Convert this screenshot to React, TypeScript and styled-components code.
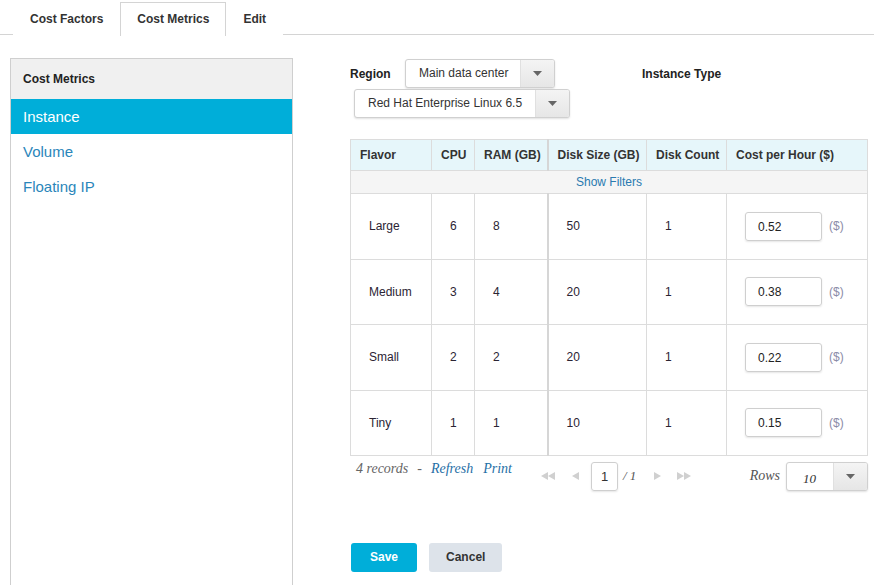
import React from "react";
import styled, { createGlobalStyle } from "styled-components";

const Global = createGlobalStyle`
  html, body { margin: 0; padding: 0; background: #fff; }
  body { font-family: "Liberation Sans", Arial, sans-serif; font-size: 12px; color: #333; }
  * { box-sizing: border-box; }
`;

const Page = styled.div`
  width: 874px;
  height: 585px;
  overflow: hidden;
`;

const TabBar = styled.div`
  display: flex;
  padding: 2px 0 0 13px;
  border-bottom: 1px solid #d4d4d4;
  height: 35px;
`;

const Tab = styled.div<{ $active?: boolean }>`
  padding: 0 16px;
  line-height: 32px;
  font-weight: bold;
  font-size: 12px;
  color: #333;
  border: 1px solid ${(p) => (p.$active ? "#d4d4d4" : "transparent")};
  border-bottom: none;
  background: #fff;
  height: ${(p) => (p.$active ? 34 : 33)}px;
`;

const Main = styled.div`
  display: flex;
  padding: 23px 0 0 10px;
`;

const Sidebar = styled.div`
  width: 283px;
  min-height: 560px;
  border: 1px solid #cfcfcf;
  flex-shrink: 0;
`;

const SideHeader = styled.div`
  height: 40px;
  background: #f0f0f0;
  font-weight: bold;
  font-size: 12px;
  color: #222;
  padding-left: 12px;
  line-height: 40px;
`;

const SideItem = styled.div<{ $active?: boolean }>`
  height: 35px;
  line-height: 35px;
  padding-left: 12px;
  font-size: 15px;
  color: ${(p) => (p.$active ? "#fff" : "#2a86ba")};
  background: ${(p) => (p.$active ? "#00aed9" : "transparent")};
`;

const Content = styled.div`
  margin-left: 57px;
  width: 518px;
  padding-top: 1px;
  display: flex;
  flex-direction: column;
`;

const FilterRow = styled.div<{ $indent?: number; $mt?: number }>`
  display: flex;
  align-items: center;
  padding-left: ${(p) => p.$indent ?? 0}px;
  margin-top: ${(p) => p.$mt ?? 0}px;
`;

const Label = styled.div<{ $w?: number; $ml?: number }>`
  font-weight: bold;
  font-size: 12px;
  color: #222;
  width: ${(p) => (p.$w ? p.$w + "px" : "auto")};
  margin-left: ${(p) => p.$ml ?? 0}px;
`;

const Select = styled.div<{ $w: number }>`
  display: flex;
  width: ${(p) => p.$w}px;
  height: 29px;
  border: 1px solid #d0d0d0;
  border-radius: 3px;
  box-shadow: 0 1px 2px rgba(0, 0, 0, 0.12);
  background: #fff;
  overflow: hidden;
`;

const SelectText = styled.div<{ $serif?: boolean; $pad?: number }>`
  flex: 1;
  padding-left: ${(p) => p.$pad ?? 13}px;
  line-height: 27px;
  font-size: ${(p) => (p.$serif ? "13px" : "12px")};
  font-family: ${(p) => (p.$serif ? '"Liberation Serif", serif' : "inherit")};
  font-style: ${(p) => (p.$serif ? "italic" : "normal")};
  color: #333;
  ${(p) => p.$serif && "padding-top: 2px;"}
`;

const SelectArrow = styled.div`
  width: 34px;
  background: linear-gradient(#f4f4f4, #e6e6e6);
  border-left: 1px solid #e0e0e0;
  display: flex;
  align-items: center;
  justify-content: center;
`;

const Caret = () => (
  <svg width="9" height="5" viewBox="0 0 9 5">
    <path d="M0 0h9L4.5 5z" fill="#666" />
  </svg>
);

const Table = styled.table`
  margin-top: 21px;
  width: 518px;
  border-collapse: collapse;
  font-size: 12px;
  border: 1px solid #dcdcdc;
`;

const Th = styled.th<{ $thick?: boolean }>`
  height: 31px;
  background: #e6f6fa;
  text-align: left;
  padding: 0 0 0 9px;
  font-weight: bold;
  color: #333;
  border: 1px solid #dcdcdc;
  ${(p) => p.$thick && "border-left: 2px solid #d6d6d6;"}
`;

const FilterCell = styled.td`
  height: 23px;
  background: #f5f5f5;
  text-align: center;
  color: #2a7ab0;
  border: 1px solid #dcdcdc;
`;

const Td = styled.td<{ $thick?: boolean }>`
  height: 65.5px;
  padding: 0 0 0 18px;
  border: 1px solid #dcdcdc;
  color: #2b2433;
  ${(p) => p.$thick && "border-left: 2px solid #d6d6d6;"}
`;

const CostWrap = styled.div`
  display: flex;
  align-items: center;
`;

const CostInput = styled.div`
  width: 77px;
  height: 29px;
  border: 1px solid #cfcfcf;
  border-radius: 3px;
  box-shadow: 0 1px 2px rgba(0, 0, 0, 0.1);
  padding-left: 12px;
  line-height: 28px;
  color: #222;
`;

const Unit = styled.span`
  margin-left: 7px;
  color: #8c8ca8;
`;

const Footer = styled.div`
  display: flex;
  align-items: center;
  height: 38px;
  padding-left: 6px;
  padding-top: 2px;
`;

const Records = styled.div`
  font-family: "Liberation Serif", serif;
  font-style: italic;
  font-size: 14px;
  color: #666;
  width: 185px;
  margin-top: -15px;
`;

const Link = styled.span<{ $ml: number }>`
  color: #1f6fa6;
  margin-left: ${(p) => p.$ml}px;
`;

const Dash = styled.span`
  margin-left: 9px;
`;

const Pager = styled.div`
  display: flex;
  align-items: center;
  width: 200px;
`;

const PageBtn = styled.span<{ $ml?: number }>`
  display: inline-flex;
  margin-left: ${(p) => p.$ml ?? 0}px;
`;

const PageBox = styled.div`
  width: 27px;
  height: 29px;
  border: 1px solid #cfcfcf;
  border-radius: 3px;
  box-shadow: 0 1px 2px rgba(0, 0, 0, 0.1);
  text-align: center;
  line-height: 28px;
  margin-left: 11px;
  font-size: 13px;
`;

const PageTotal = styled.span`
  font-family: "Liberation Serif", serif;
  font-style: italic;
  font-size: 13px;
  color: #555;
  margin-left: 5px;
`;

const Spacer = styled.div`
  flex: 1;
`;

const RowsLabel = styled.span`
  font-family: "Liberation Serif", serif;
  font-style: italic;
  font-size: 14px;
  color: #555;
  margin-right: 6px;
`;

const Buttons = styled.div`
  display: flex;
  gap: 12px;
  margin-top: 49px;
  padding-left: 1px;
`;

const Button = styled.div<{ $primary?: boolean }>`
  height: 29px;
  line-height: 29px;
  padding: 0 ${(p) => (p.$primary ? 19 : 17)}px;
  border-radius: 3px;
  font-weight: bold;
  font-size: 12px;
  background: ${(p) => (p.$primary ? "#00aed9" : "#dde3ea")};
  color: ${(p) => (p.$primary ? "#fff" : "#333")};
`;

const Tri = ({ dir, double }: { dir: "l" | "r"; double?: boolean }) => {
  const one = (x: number) =>
    dir === "l" ? `M${x + 7} 0v8L${x} 4z` : `M${x} 0v8L${x + 7} 4z`;
  return (
    <svg width={double ? 15 : 8} height="8" viewBox={`0 0 ${double ? 15 : 8} 8`}>
      <path d={one(0)} fill="#d0d0d0" />
      {double && <path d={one(7)} fill="#d0d0d0" />}
    </svg>
  );
};

const rows = [
  { f: "Large", cpu: 6, ram: 8, disk: 50, cnt: 1, cost: "0.52" },
  { f: "Medium", cpu: 3, ram: 4, disk: 20, cnt: 1, cost: "0.38" },
  { f: "Small", cpu: 2, ram: 2, disk: 20, cnt: 1, cost: "0.22" },
  { f: "Tiny", cpu: 1, ram: 1, disk: 10, cnt: 1, cost: "0.15" },
];

export default function App() {
  return (
    <Page>
      <Global />
      <TabBar>
        <Tab>Cost Factors</Tab>
        <Tab $active>Cost Metrics</Tab>
        <Tab>Edit</Tab>
      </TabBar>
      <Main>
        <Sidebar>
          <SideHeader>Cost Metrics</SideHeader>
          <SideItem $active>Instance</SideItem>
          <SideItem>Volume</SideItem>
          <SideItem>Floating IP</SideItem>
        </Sidebar>
        <Content>
          <FilterRow>
            <Label $w={55}>Region</Label>
            <Select $w={150}>
              <SelectText>Main data center</SelectText>
              <SelectArrow>
                <Caret />
              </SelectArrow>
            </Select>
            <Label $ml={87}>Instance Type</Label>
          </FilterRow>
          <FilterRow $indent={4} $mt={1}>
            <Select $w={216}>
              <SelectText>Red Hat Enterprise Linux 6.5</SelectText>
              <SelectArrow>
                <Caret />
              </SelectArrow>
            </Select>
          </FilterRow>
          <Table>
            <colgroup>
              <col style={{ width: 81 }} />
              <col style={{ width: 43 }} />
              <col style={{ width: 73 }} />
              <col style={{ width: 99 }} />
              <col style={{ width: 80 }} />
              <col />
            </colgroup>
            <thead>
              <tr>
                <Th>Flavor</Th>
                <Th>CPU</Th>
                <Th>RAM (GB)</Th>
                <Th $thick>Disk Size (GB)</Th>
                <Th>Disk Count</Th>
                <Th>Cost per Hour ($)</Th>
              </tr>
            </thead>
            <tbody>
              <tr>
                <FilterCell colSpan={6}>Show Filters</FilterCell>
              </tr>
              {rows.map((r) => (
                <tr key={r.f}>
                  <Td>{r.f}</Td>
                  <Td>{r.cpu}</Td>
                  <Td>{r.ram}</Td>
                  <Td $thick>{r.disk}</Td>
                  <Td>{r.cnt}</Td>
                  <Td>
                    <CostWrap>
                      <CostInput>{r.cost}</CostInput>
                      <Unit>($)</Unit>
                    </CostWrap>
                  </Td>
                </tr>
              ))}
            </tbody>
          </Table>
          <Footer>
            <Records>
              4 records<Dash>-</Dash>
              <Link $ml={9}>Refresh</Link>
              <Link $ml={10}>Print</Link>
            </Records>
            <Pager>
              <PageBtn>
                <Tri dir="l" double />
              </PageBtn>
              <PageBtn $ml={16}>
                <Tri dir="l" />
              </PageBtn>
              <PageBox>1</PageBox>
              <PageTotal>/ 1</PageTotal>
              <PageBtn $ml={18}>
                <Tri dir="r" />
              </PageBtn>
              <PageBtn $ml={15}>
                <Tri dir="r" double />
              </PageBtn>
            </Pager>
            <Spacer />
            <RowsLabel>Rows</RowsLabel>
            <Select $w={82}>
              <SelectText $serif $pad={16}>10</SelectText>
              <SelectArrow>
                <Caret />
              </SelectArrow>
            </Select>
          </Footer>
          <Buttons>
            <Button $primary>Save</Button>
            <Button>Cancel</Button>
          </Buttons>
        </Content>
      </Main>
    </Page>
  );
}
